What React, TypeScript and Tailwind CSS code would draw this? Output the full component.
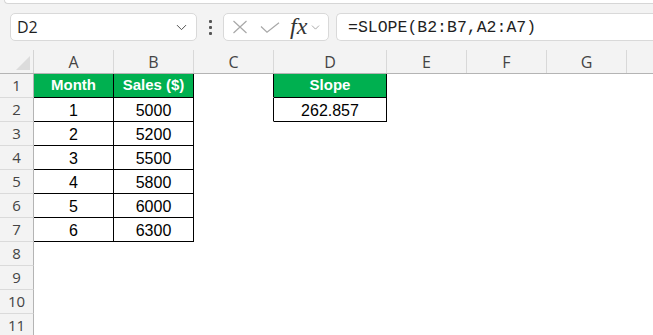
import { ChevronDown } from 'lucide-react'

const COLS = ['A', 'B', 'C', 'D', 'E', 'F', 'G', '']
const WIDTHS = ['w-[34px]', 'w-[80px]', 'w-[80px]', 'w-[80px]', 'w-[113px]', 'w-[80px]', 'w-[80px]', 'w-[80px]', 'w-[80px]']

const SALES = [
  ['Month', 'Sales ($)'],
  ['1', '5000'],
  ['2', '5200'],
  ['3', '5500'],
  ['4', '5800'],
  ['5', '6000'],
  ['6', '6300'],
]

const ROWS = Array.from({ length: 11 }, (_, i) => i + 1)

function cellFor(row: number, col: number) {
  // text, green header or not, and which borders are drawn black
  if ((col === 0 || col === 1) && row <= 7) {
    return { text: SALES[row - 1][col], head: row === 1, edge: 'border-black' }
  }
  if (col === 3 && row === 1) return { text: 'Slope', head: true, edge: 'border-black' }
  if (col === 3 && row === 2) return { text: '262.857', head: false, edge: 'border-black' }
  if (col === 2 && row <= 2) return { text: '', head: false, edge: 'border-r-black border-b-transparent' }
  return { text: '', head: false, edge: 'border-transparent' }
}

function XIcon() {
  return (
    <svg width="16" height="14" viewBox="0 0 16 14" fill="none" stroke="#a8a8a8" strokeWidth="1.2">
      <path d="M1.5 1 L14.5 13 M14.5 1 L1.5 13" />
    </svg>
  )
}

function CheckIcon() {
  return (
    <svg width="20" height="11" viewBox="0 0 20 11" fill="none" stroke="#a8a8a8" strokeWidth="1.2">
      <path d="M1 4.5 L7 10.2 L19 0.8" />
    </svg>
  )
}

export default function App() {
  return (
    <div className="w-[653px] h-[335px] overflow-hidden bg-white font-['Open_Sans',sans-serif]">
      {/* formula bar */}
      <div className="h-[50px] bg-[#f3f3f3] flex flex-col">
        <div className="h-[4px] ml-[4px] bg-white rounded-bl-[6px] border-b border-l border-[#d6d6d6]" />
        <div className="flex items-center pl-[10px] pt-[9px]">
          <div className="w-[187px] h-[28px] bg-white border border-[#d9d9d9] rounded-[5px] flex items-center pl-[6px] pr-[6px]">
            <span className="flex-1 text-[16px] text-[#1f1f1f]">D2</span>
            <ChevronDown size={17} strokeWidth={1.3} className="text-[#444]" />
          </div>
          <div className="w-[26px] flex flex-col items-center gap-[3px]">
            <span className="w-[3px] h-[3px] bg-[#555] rounded-[1px]" />
            <span className="w-[3px] h-[3px] bg-[#555] rounded-[1px]" />
            <span className="w-[3px] h-[3px] bg-[#555] rounded-[1px]" />
          </div>
          <div className="w-[106px] h-[28px] bg-white border border-[#d9d9d9] rounded-[5px] flex items-center pl-[8px]">
            <XIcon />
            <span className="ml-[12px]"><CheckIcon /></span>
            <span className="ml-[10px] font-['Liberation_Serif',serif] italic text-[24px] leading-none text-[#333] -mt-[3px]">fx</span>
            <ChevronDown size={13} strokeWidth={1.3} className="ml-[2px] text-[#888]" />
          </div>
          <div className="ml-[7px] flex-1 h-[28px] bg-white border border-r-0 border-[#d9d9d9] rounded-l-[5px] flex items-center pl-[11px] pt-[3px]">
            <span className="font-['Liberation_Mono',monospace] text-[16.5px] text-[#1f1f1f]">=SLOPE(B2:B7,A2:A7)</span>
          </div>
        </div>
      </div>

      {/* column headers */}
      <div className="flex h-[24px] bg-[#f3f3f3] border-b border-[#b4b4b4]">
        <div className="w-[34px] shrink-0 border-r border-[#d4d4d4] flex items-end justify-end pr-[3px] pb-[3px]">
          <svg width="14" height="14" viewBox="0 0 14 14">
            <path d="M14 0 L14 14 L0 14 Z" fill="#dcdcdc" />
          </svg>
        </div>
        {COLS.map((c, i) => (
          <div
            key={i}
            className={`${WIDTHS[i + 1]} shrink-0 border-r border-[#d8d8d8] flex items-center justify-center text-[16px] text-[#444] pt-[1px]`}
          >
            {c}
          </div>
        ))}
      </div>

      {/* rows */}
      {ROWS.map((r) => (
        <div key={r} className="flex h-[24px]">
          <div className="w-[34px] shrink-0 bg-[#f3f3f3] border-r border-r-[#b4b4b4] border-b border-b-[#dadada] flex items-center justify-center text-[15px] text-[#444]">
            {r}
          </div>
          {COLS.map((_, c) => {
            const cell = cellFor(r, c)
            return (
              <div
                key={c}
                className={`${WIDTHS[c + 1]} shrink-0 border-r border-b ${cell.edge} flex items-center justify-center font-['Liberation_Sans',sans-serif] ${
                  cell.head
                    ? 'bg-[#00b050] text-white font-bold text-[15px]'
                    : 'text-black text-[16px] pt-[2px]'
                }`}
              >
                {cell.text}
              </div>
            )
          })}
        </div>
      ))}
    </div>
  )
}
